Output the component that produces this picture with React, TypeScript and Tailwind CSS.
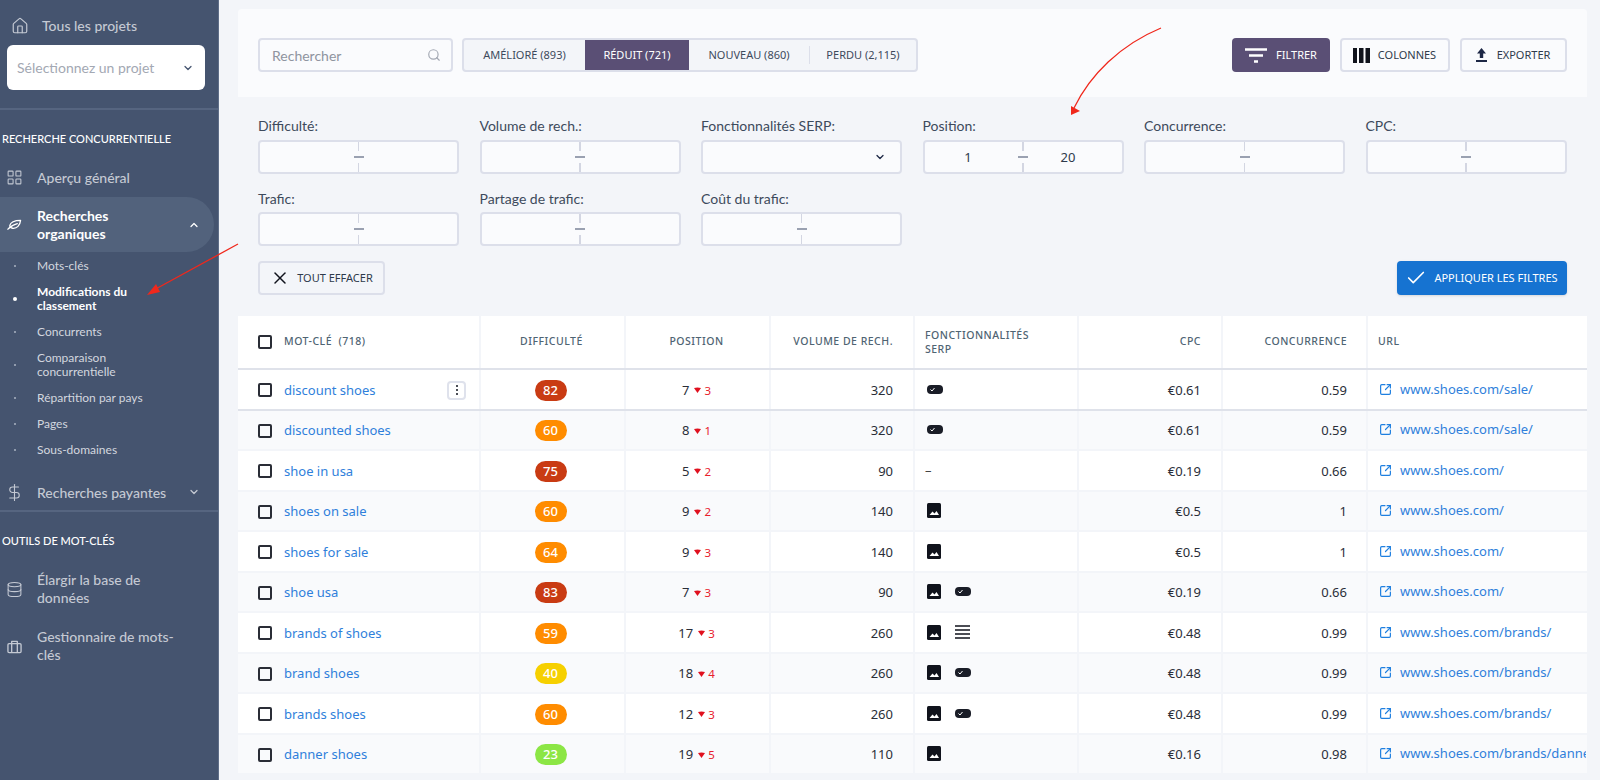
import React from "react";
import { Home, LayoutGrid, ChevronUp, ChevronDown, DollarSign, Database, Search, X, Check, SquareArrowOutUpRight } from "lucide-react";

const ImgIcon = () => (
  <svg width="14" height="15" viewBox="0 0 14 15" className="shrink-0">
    <rect x="0" y="0" width="14" height="15" rx="1.5" fill="#10131c" />
    <path d="M2.5 12 L5.5 8.5 L7.5 10.5 L9.5 8 L12 12 Z" fill="#fff" />
  </svg>
);
const ChipIcon = () => (
  <svg width="16" height="9" viewBox="0 0 16 9" className="shrink-0">
    <rect x="0" y="0" width="16" height="9" rx="4" fill="#1a1d27" />
    <path d="M3.5 4.5 L5 6 L7.5 3" stroke="#fff" strokeWidth="1" fill="none" />
  </svg>
);
const LinesIcon = () => (
  <svg width="15" height="14" viewBox="0 0 15 14" className="shrink-0">
    <path d="M0 1H15M0 5H15M0 9H15M0 13H15" stroke="#10131c" strokeWidth="1.6" />
  </svg>
);
const LeafIcon = () => (
  <svg width="15" height="15" viewBox="0 0 16 16" fill="none" stroke="currentColor" strokeWidth="1.4" strokeLinecap="round" strokeLinejoin="round" className="shrink-0">
    <path d="M3 9C4 5 9 3.5 14.5 3.5C14 9 10.5 12.5 6 12C4.5 11.8 3 10.5 3 9Z" />
    <path d="M1 13C4 9.5 7 8 11 7" />
  </svg>
);
const ToolboxIcon = () => (
  <svg width="15" height="15" viewBox="0 0 16 16" fill="none" stroke="currentColor" strokeWidth="1.4" strokeLinejoin="round" className="shrink-0">
    <rect x="1" y="5" width="14" height="9.5" rx="1.2" />
    <path d="M5 14.5V2.5H11V14.5" />
  </svg>
);

const Section = ({ children }: { children: React.ReactNode }) => (
  <div className="pl-[2px] text-[11px] leading-[14px] font-medium text-white">{children}</div>
);

const SubItem = ({ lines, active }: { lines: string[]; active?: boolean }) => (
  <div className="flex items-center">
    <span className="flex w-[29px] shrink-0 justify-center">
      <span className={active ? "h-[4px] w-[4px] rounded-full bg-white" : "h-[2px] w-[2px] rounded-full bg-[#aab3c2]"} />
    </span>
    <span className={`pl-[8px] text-[12px] leading-[14px] ${active ? "font-bold text-white" : "text-[#d3d7df]"}`}>
      {lines.map((l) => (
        <span key={l} className="block">{l}</span>
      ))}
    </span>
  </div>
);

const Sidebar = () => (
  <aside className="h-[780px] w-[219px] shrink-0 border-r border-[#5f6e88] bg-[#45546f] font-['Lato',sans-serif]">
    <div className="flex h-[45px] items-center pl-[11px] pt-[6px] text-[#c4c9d3]">
      <Home size={18} strokeWidth={1.6} />
      <span className="ml-[13px] text-[14px] font-medium">Tous les projets</span>
    </div>
    <div className="ml-[7px] flex h-[45px] w-[198px] items-center justify-between rounded-[6px] bg-white pl-[10px] pr-[11px]">
      <span className="text-[14px] text-[#a3a8b3]">Sélectionnez un projet</span>
      <ChevronDown size={12} strokeWidth={2.5} className="text-[#45546f]" />
    </div>
    <div className="mt-[18px] h-[2px] bg-[#566580]" />
    <div className="mt-[22px]"><Section>RECHERCHE CONCURRENTIELLE</Section></div>
    <div className="mt-[21px] flex h-[20px] items-center pl-[6px] text-[#c4c9d3]">
      <LayoutGrid size={17} strokeWidth={1.5} />
      <span className="ml-[14px] text-[14px] font-medium">Aperçu général</span>
    </div>
    <div className="mt-[10px] flex h-[55px] w-[214px] items-center justify-between rounded-r-[28px] bg-[#52627c] pl-[7px] pr-[14px] text-white">
      <div className="flex items-center">
        <LeafIcon />
        <span className="ml-[15px] text-[14px] font-bold leading-[18px]">Recherches<br />organiques</span>
      </div>
      <ChevronUp size={12} strokeWidth={2.5} />
    </div>
    <div className="mt-[7px] flex flex-col gap-[12px]">
      <SubItem lines={["Mots-clés"]} />
      <SubItem active lines={["Modifications du", "classement"]} />
      <SubItem lines={["Concurrents"]} />
      <SubItem lines={["Comparaison", "concurrentielle"]} />
      <SubItem lines={["Répartition par pays"]} />
      <SubItem lines={["Pages"]} />
      <SubItem lines={["Sous-domaines"]} />
    </div>
    <div className="mt-[25px] flex h-[20px] w-[214px] items-center justify-between pl-[5px] pr-[14px] text-[#c4c9d3]">
      <div className="flex items-center">
        <DollarSign size={19} strokeWidth={1.4} />
        <span className="ml-[13px] text-[14px] font-medium">Recherches payantes</span>
      </div>
      <ChevronDown size={12} strokeWidth={2.5} />
    </div>
    <div className="mt-[8px] h-[2px] bg-[#566580]" />
    <div className="mt-[22px]"><Section>OUTILS DE MOT-CLÉS</Section></div>
    <div className="mt-[23px] flex items-center pl-[6px] text-[#c4c9d3]">
      <Database size={17} strokeWidth={1.5} />
      <span className="ml-[14px] text-[14px] font-medium leading-[18px]">Élargir la base de<br />données</span>
    </div>
    <div className="mt-[21px] flex items-center pl-[7px] text-[#c4c9d3]">
      <ToolboxIcon />
      <span className="ml-[15px] text-[14px] font-medium leading-[18px]">Gestionnaire de mots-<br />clés</span>
    </div>
  </aside>
);

const Toolbar = () => (
  <div className="flex h-[88px] items-center justify-between rounded-t-[4px] bg-[#fafbfd] px-[20px] pt-[4px]">
    <div className="flex items-center gap-[9px]">
      <div className="flex h-[34px] w-[195px] items-center justify-between rounded-[4px] border-2 border-[#dcdfea] pl-[12px] pr-[10px]">
        <span className="font-['Lato',sans-serif] text-[14px] text-[#8f949f]">Rechercher</span>
        <Search size={14} className="text-[#a3a8b3]" />
      </div>
      <div className="flex h-[34px] w-[456px] items-stretch overflow-hidden rounded-[4px] border-2 border-[#dcdfea] bg-[#f3f5f9] text-[11px] text-[#3d4a5c]">
        <span className="flex w-[121px] items-center justify-center">AMÉLIORÉ (893)</span>
        <span className="flex w-[104px] items-center justify-center bg-[#5a4f75] text-white">RÉDUIT (721)</span>
        <span className="my-[6px] flex w-[121px] items-center justify-center border-r border-[#dcdfea]">NOUVEAU (860)</span>
        <span className="flex flex-1 items-center justify-center">PERDU (2,115)</span>
      </div>
    </div>
    <div className="flex items-center gap-[10px] text-[11px] text-[#2e3a4b]">
      <div className="flex h-[34px] w-[98px] items-center justify-center gap-[9px] rounded-[4px] bg-[#5a4f75] pl-[1px] text-white">
        <svg width="22" height="15" viewBox="0 0 22 15"><path d="M0 1.5H22M4 7.5H18M9 13.5H13" stroke="#fff" strokeWidth="2.4" /></svg>
        FILTRER
      </div>
      <div className="flex h-[34px] w-[110px] items-center justify-center gap-[8px] rounded-[4px] border-2 border-[#dcdfea]">
        <svg width="17" height="15" viewBox="0 0 17 15"><path d="M0 0H4V15H0ZM6 0H10.5V15H6ZM12.5 0H17V15H12.5Z" fill="#10131c" /></svg>
        COLONNES
      </div>
      <div className="flex h-[34px] w-[107px] items-center justify-center gap-[10px] rounded-[4px] border-2 border-[#dcdfea]">
        <svg width="11" height="14" viewBox="0 0 11 14"><path d="M5.5 0L10 5.5H7.2V10H3.8V5.5H1ZM0 12H11V14H0Z" fill="#1d2745" /></svg>
        EXPORTER
      </div>
    </div>
  </div>
);

const Range = ({ a, b }: { a?: string; b?: string }) => (
  <div className="grid h-[34px] grid-cols-[1fr_11px_1fr] items-center rounded-[4px] border-2 border-[#dcdfea] bg-[#fafbfd] text-[13px] text-[#2e3a4b]">
    <span className="pr-[6px] pt-[1px] text-center">{a}</span>
    <span className="flex h-full flex-col items-center justify-between">
      <span className="h-[9px] w-[1.5px] bg-[#d3d6e2]" />
      <span className="h-[2px] w-[10px] bg-[#9aa1b1]" />
      <span className="h-[9px] w-[1.5px] bg-[#d3d6e2]" />
    </span>
    <span className="pr-[14px] pt-[1px] text-center">{b}</span>
  </div>
);

const Field = ({ label, first, children }: { label: string; first?: boolean; children: React.ReactNode }) => (
  <div>
    <div className={`${first ? "mb-[5px]" : "mb-[4px]"} h-[18px] font-['Lato',sans-serif] text-[14px] leading-[18px] text-[#3d4a5c]`}>{label}</div>
    {children}
  </div>
);

const Filters = () => (
  <div className="h-[219px] pl-[20px] pr-[20px] pt-[20px]">
    <div className="grid grid-cols-[repeat(6,201px)] gap-x-[20.5px] gap-y-[16px]">
      <Field first label="Difficulté:"><Range /></Field>
      <Field first label="Volume de rech.:"><Range /></Field>
      <Field first label="Fonctionnalités SERP:">
        <div className="flex h-[34px] items-center justify-end rounded-[4px] border-2 border-[#dcdfea] bg-[#fafbfd] pr-[14px]">
          <ChevronDown size={12} strokeWidth={2.5} className="text-[#1d2745]" />
        </div>
      </Field>
      <Field first label="Position:"><Range a="1" b="20" /></Field>
      <Field first label="Concurrence:"><Range /></Field>
      <Field first label="CPC:"><Range /></Field>
      <Field label="Trafic:"><Range /></Field>
      <Field label="Partage de trafic:"><Range /></Field>
      <Field label="Coût du trafic:"><Range /></Field>
    </div>
    <div className="mt-[15px] flex items-center justify-between">
      <div className="flex h-[34px] w-[127px] items-center justify-center gap-[7px] rounded-[4px] border-2 border-[#dcdfea] text-[11px] text-[#2e3a4b]">
        <X size={20} strokeWidth={1.8} className="text-[#10131c]" />
        TOUT EFFACER
      </div>
      <div className="flex h-[34px] w-[170px] items-center justify-center gap-[7px] rounded-[4px] bg-[#1673d1] text-[11px] text-white shadow-sm">
        <Check size={22} strokeWidth={1.8} />
        APPLIQUER LES FILTRES
      </div>
    </div>
  </div>
);

const COLS = "grid grid-cols-[243px_145px_145px_144px_164px_144px_145px_218px]";
const cell = "border-r-2 border-[#f3f5f9] flex items-center";
const rowCell = "border-r-2 border-[#f3f5f9] flex items-center pt-[2px]";

type Row = { k: string; d: number; c: string; p: number; dl: number; v: number; f: string[]; cpc: string; co: string; u: string };

const rows: Row[] = [
  { k: "discount shoes", d: 82, c: "bg-[#c93b13]", p: 7, dl: 3, v: 320, f: ["chip"], cpc: "€0.61", co: "0.59", u: "www.shoes.com/sale/" },
  { k: "discounted shoes", d: 60, c: "bg-[#ff8c00]", p: 8, dl: 1, v: 320, f: ["chip"], cpc: "€0.61", co: "0.59", u: "www.shoes.com/sale/" },
  { k: "shoe in usa", d: 75, c: "bg-[#c93b13]", p: 5, dl: 2, v: 90, f: [], cpc: "€0.19", co: "0.66", u: "www.shoes.com/" },
  { k: "shoes on sale", d: 60, c: "bg-[#ff8c00]", p: 9, dl: 2, v: 140, f: ["img"], cpc: "€0.5", co: "1", u: "www.shoes.com/" },
  { k: "shoes for sale", d: 64, c: "bg-[#ff8c00]", p: 9, dl: 3, v: 140, f: ["img"], cpc: "€0.5", co: "1", u: "www.shoes.com/" },
  { k: "shoe usa", d: 83, c: "bg-[#c93b13]", p: 7, dl: 3, v: 90, f: ["img", "chip"], cpc: "€0.19", co: "0.66", u: "www.shoes.com/" },
  { k: "brands of shoes", d: 59, c: "bg-[#ff8c00]", p: 17, dl: 3, v: 260, f: ["img", "lines"], cpc: "€0.48", co: "0.99", u: "www.shoes.com/brands/" },
  { k: "brand shoes", d: 40, c: "bg-[#f6d000]", p: 18, dl: 4, v: 260, f: ["img", "chip"], cpc: "€0.48", co: "0.99", u: "www.shoes.com/brands/" },
  { k: "brands shoes", d: 60, c: "bg-[#ff8c00]", p: 12, dl: 3, v: 260, f: ["img", "chip"], cpc: "€0.48", co: "0.99", u: "www.shoes.com/brands/" },
  { k: "danner shoes", d: 23, c: "bg-[#8ce645]", p: 19, dl: 5, v: 110, f: ["img"], cpc: "€0.16", co: "0.98", u: "www.shoes.com/brands/danner/" },
];

const Box = () => <span className="h-[14px] w-[14px] shrink-0 rounded-[2px] border-2 border-[#2a2d36]" />;

const Table = () => (
  <div className="font-['Noto_Sans',sans-serif]">
    <div className={`${COLS} h-[54px] border-b-2 border-[#dfe2ea] bg-white text-[10.5px] font-medium tracking-[0.5px] text-[#4f6473]`}>
      <div className={`${cell} pl-[20px]`}><Box /><span className="ml-[12px]">MOT-CLÉ&nbsp; (718)</span></div>
      <div className={`${cell} justify-center pr-[2px]`}>DIFFICULTÉ</div>
      <div className={`${cell} justify-center pr-[2px]`}>POSITION</div>
      <div className={`${cell} justify-end pr-[20px]`}>VOLUME DE RECH.</div>
      <div className={`${cell} pl-[10px] leading-[14px]`}>FONCTIONNALITÉS<br />SERP</div>
      <div className={`${cell} justify-end pr-[20px]`}>CPC</div>
      <div className={`${cell} justify-end pr-[19px]`}>CONCURRENCE</div>
      <div className="flex items-center pl-[10px]">URL</div>
    </div>
    {rows.map((r, i) => (
      <div
        key={r.k}
        className={`${COLS} h-[40.5px] border-b-2 text-[13px] text-[#2a2e38] ${i === 0 ? "border-[#dfe2ea]" : "border-[#f3f5f9]"} ${i % 2 ? "bg-[#f9fafc]" : "bg-white"}`}
      >
        <div className={`${rowCell} justify-between pl-[20px] pr-[13px]`}>
          <span className="flex items-center">
            <Box />
            <span className="ml-[12px] text-[13px] text-[#2f7fdb]">{r.k}</span>
          </span>
          {i === 0 && (
            <span className="flex h-[19px] w-[19px] flex-col items-center justify-center gap-[2px] rounded-[4px] border-2 border-[#dfe2ec]">
              <span className="h-[2px] w-[2px] rounded-full bg-[#10131c]" />
              <span className="h-[2px] w-[2px] rounded-full bg-[#10131c]" />
              <span className="h-[2px] w-[2px] rounded-full bg-[#10131c]" />
            </span>
          )}
        </div>
        <div className={`${rowCell} justify-center pr-[4px]`}>
          <span className={`flex h-[21px] w-[32px] items-center justify-center rounded-full text-[13px] font-medium text-white ${r.c}`}>{r.d}</span>
        </div>
        <div className={`${rowCell} justify-center pr-[2px]`}>
          <span>{r.p}</span>
          <svg width="7" height="6" viewBox="0 0 7 6" className="ml-[5px] mr-[3px]"><path d="M0 1L3.5 0.5L7 1L3.5 6Z" fill="#e0101e" /></svg>
          <span className="text-[11.5px] text-[#e8202c]">{r.dl}</span>
        </div>
        <div className={`${rowCell} justify-end pr-[20px]`}>{r.v}</div>
        <div className={`${cell} gap-[14px] pl-[12px]`}>
          {r.f.length === 0 && <span className="-ml-[2px] text-[#444]">–</span>}
          {r.f.map((f) => (f === "img" ? <ImgIcon key={f} /> : f === "chip" ? <ChipIcon key={f} /> : <LinesIcon key={f} />))}
        </div>
        <div className={`${rowCell} justify-end pr-[20px]`}>{r.cpc}</div>
        <div className={`${rowCell} justify-end pr-[19px]`}>{r.co}</div>
        <div className="flex items-center overflow-hidden whitespace-nowrap pl-[11px] text-[#2f7fdb]">
          <SquareArrowOutUpRight size={13} strokeWidth={2.2} className="mr-[8px] shrink-0 text-[#1e7fe0]" />
          {r.u}
        </div>
      </div>
    ))}
  </div>
);

export default function App() {
  return (
    <div className="relative flex h-[780px] w-[1600px] overflow-hidden bg-[#f3f5f9] font-['Noto_Sans',sans-serif]">
      <Sidebar />
      <main className="ml-[19px] mr-[14px] flex-1 pt-[9px]">
        <Toolbar />
        <Filters />
        <Table />
      </main>
      <svg className="pointer-events-none absolute left-0 top-0" width="1600" height="780" viewBox="0 0 1600 780">
        <path d="M238 244L152 291" stroke="#f0281c" strokeWidth="1.3" fill="none" />
        <path d="M147 295L156 284L160 292Z" fill="#f0281c" />
        <path d="M1161 28C1120 45 1090 75 1074 108" stroke="#f0281c" strokeWidth="1.3" fill="none" />
        <path d="M1071 115L1071 106L1080 111Z" fill="#f0281c" />
      </svg>
    </div>
  );
}
